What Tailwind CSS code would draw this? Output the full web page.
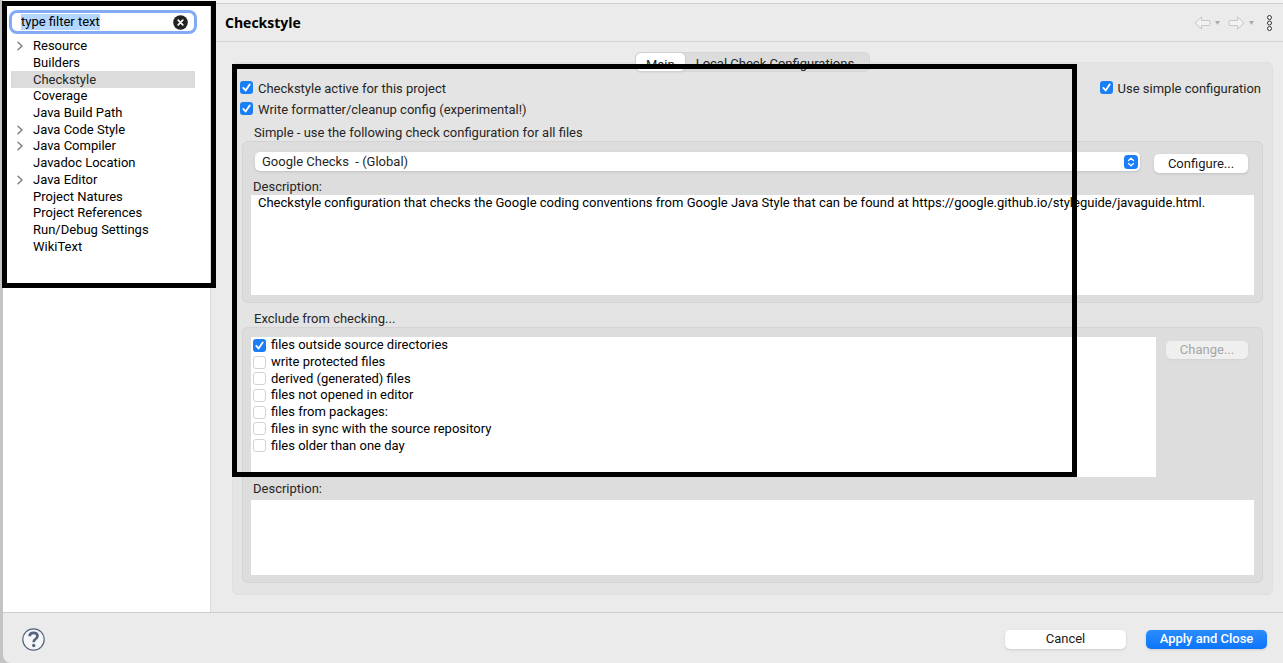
<!DOCTYPE html>
<html lang="en">
<head>
<meta charset="utf-8">
<title>Checkstyle</title>
<script src="https://cdn.jsdelivr.net/npm/@tailwindcss/browser@4"></script>
</head>
<body class="relative flex min-h-screen bg-[#c4c4c4] pl-[3px] font-['Roboto','Liberation_Sans',sans-serif] text-[13px] leading-4 text-[#262626]">
<svg class="hidden" aria-hidden="true">
  <symbol id="tick" viewBox="0 0 13 13"><path d="M3.3 6.9 5.6 9.5 9.7 3.4" fill="none" stroke="#fff" stroke-width="1.8" stroke-linecap="round" stroke-linejoin="round"/></symbol>
  <symbol id="chevron" viewBox="0 0 8 10"><path d="M2 1.2 6 5 2 8.8" fill="none" stroke="#808080" stroke-width="1.5" stroke-linecap="round" stroke-linejoin="round"/></symbol>
</svg>

<div class="flex min-w-0 flex-1 flex-col rounded-bl-lg bg-[#ebebeb]">
  <div class="h-1 shrink-0 border-b border-[#cfcfcf] bg-[#f3f3f3]"></div>

  <div class="flex flex-1">
    <aside class="w-52 shrink-0 border-r border-[#dcdcdc] bg-white pt-[6px]">
      <div class="mr-[13px] ml-[6px] flex h-6 items-center rounded-lg bg-white pr-[9px] pl-3 ring-[3px] ring-[#82abf3] ring-inset">
        <input id="filter" type="text" aria-label="Filter" value="type filter text" class="w-full min-w-0 bg-transparent leading-4 text-black outline-none selection:bg-[#b3d7ff] selection:text-black">
        <button type="button" aria-label="Clear filter" class="shrink-0">
          <svg class="block size-[15px]" viewBox="0 0 15 15"><circle cx="7.5" cy="7.5" r="7.3" fill="#222"/><path d="m5.2 5.2 4.6 4.6m0-4.6-4.6 4.6" stroke="#fff" stroke-width="1.7" stroke-linecap="round"/></svg>
        </button>
      </div>
      <ul class="mt-1 mr-[15px] ml-2 grid h-[217px] auto-rows-fr text-black">
        <li class="flex items-center pl-[5px]"><svg class="mr-[9px] h-[10px] w-2"><use href="#chevron"/></svg>Resource</li>
        <li class="flex items-center pl-[22px]">Builders</li>
        <li class="flex items-center bg-[#dcdcdc] pl-[22px] text-[#262626]">Checkstyle</li>
        <li class="flex items-center pl-[22px]">Coverage</li>
        <li class="flex items-center pl-[22px]">Java Build Path</li>
        <li class="flex items-center pl-[5px]"><svg class="mr-[9px] h-[10px] w-2"><use href="#chevron"/></svg>Java Code Style</li>
        <li class="flex items-center pl-[5px]"><svg class="mr-[9px] h-[10px] w-2"><use href="#chevron"/></svg>Java Compiler</li>
        <li class="flex items-center pl-[22px]">Javadoc Location</li>
        <li class="flex items-center pl-[5px]"><svg class="mr-[9px] h-[10px] w-2"><use href="#chevron"/></svg>Java Editor</li>
        <li class="flex items-center pl-[22px]">Project Natures</li>
        <li class="flex items-center pl-[22px]">Project References</li>
        <li class="flex items-center pl-[22px]">Run/Debug Settings</li>
        <li class="flex items-center pl-[22px]">WikiText</li>
      </ul>
    </aside>

    <main class="flex min-w-0 flex-1 flex-col">
      <header class="flex h-[38px] shrink-0 items-center border-b border-[#d3d3d3] pr-[10px] pl-[14px]">
        <h1 class="flex-1 font-['Open_Sans','Noto_Sans',sans-serif] text-sm leading-4 font-bold text-black">Checkstyle</h1>
        <button type="button" aria-label="Back" class="mr-1"><svg class="block h-[14px] w-[17px]" viewBox="0 0 17 14" fill="#f2f2f2" stroke="#c6c6c6" stroke-linejoin="round"><path d="M1 7 7.5 1v3.5H15q1 0 1 1v3q0 1-1 1H7.5V13Z"/></svg></button>
        <button type="button" aria-label="Back history" class="mr-2"><svg class="block h-1 w-[5px]" viewBox="0 0 5 4"><path d="M0 0h5L2.5 4Z" fill="#aaa"/></svg></button>
        <button type="button" aria-label="Forward" class="mr-1"><svg class="block h-[14px] w-[17px]" viewBox="0 0 17 14" fill="#f2f2f2" stroke="#c6c6c6" stroke-linejoin="round"><path d="M16 7 9.5 1v3.5H2q-1 0-1 1v3q0 1 1 1h7.5V13Z"/></svg></button>
        <button type="button" aria-label="Forward history" class="mr-3"><svg class="block h-1 w-[5px]" viewBox="0 0 5 4"><path d="M0 0h5L2.5 4Z" fill="#aaa"/></svg></button>
        <button type="button" aria-label="View menu"><svg class="block h-[18px] w-[7px]" viewBox="0 0 7 18" fill="#f4f4f4" stroke="#333"><circle cx="3.5" cy="3.5" r="2"/><circle cx="3.5" cy="9" r="2"/><circle cx="3.5" cy="14.5" r="2"/></svg></button>
      </header>

      <div class="flex flex-1 flex-col px-[10px] pt-[10px] pb-[17px] pl-[21px]">
        <div class="z-10 -mb-[10px] flex h-5 self-center rounded-md bg-[#dcdcdc] ring-1 ring-[#d6d6d6] ring-inset" role="tablist">
          <button type="button" role="tab" aria-selected="true" class="rounded-md border border-[#d0d0d0] bg-white px-[10px] pt-1 shadow-xs">Main</button>
          <button type="button" role="tab" aria-selected="false" class="pt-1 pr-4 pl-[10px]">Local Check Configurations</button>
        </div>

        <div class="flex-1 rounded-md border border-[#dfdfdf] bg-[#e4e4e4] px-[9px] pt-[18px] pb-[10px]">
          <div class="-ml-[2px] flex justify-between pr-[2px]">
            <label class="flex items-start gap-[5px]"><span class="grid size-[13px]"><input type="checkbox" checked class="peer col-start-1 row-start-1 size-[13px] appearance-none rounded-[3px] checked:bg-[#1a7ff5]"><svg class="pointer-events-none col-start-1 row-start-1 hidden size-[13px] peer-checked:block"><use href="#tick"/></svg></span>Checkstyle active for this project</label>
            <label class="flex items-start gap-[5px]"><span class="grid size-[13px]"><input type="checkbox" checked class="peer col-start-1 row-start-1 size-[13px] appearance-none rounded-[3px] checked:bg-[#1a7ff5]"><svg class="pointer-events-none col-start-1 row-start-1 hidden size-[13px] peer-checked:block"><use href="#tick"/></svg></span>Use simple configuration</label>
          </div>
          <label class="mt-[5px] -ml-[2px] flex items-start gap-[5px]"><span class="grid size-[13px]"><input type="checkbox" checked class="peer col-start-1 row-start-1 size-[13px] appearance-none rounded-[3px] checked:bg-[#1a7ff5]"><svg class="pointer-events-none col-start-1 row-start-1 hidden size-[13px] peer-checked:block"><use href="#tick"/></svg></span>Write formatter/cleanup config (experimental!)</label>

          <h2 id="simple" class="mt-[7px] pl-3">Simple - use the following check configuration for all files</h2>
          <section aria-labelledby="simple" class="rounded-md border border-[#d4d4d4] bg-[#dddddd] px-2 pt-[10px] pb-[7px]">
            <div class="flex items-start pr-[6px] pl-1">
              <div class="grid flex-1 items-center">
                <select aria-label="Check configuration" class="col-start-1 row-start-1 h-[19px] w-full appearance-none rounded-[5px] bg-white pr-6 pl-[7px] shadow-sm"><option>Google Checks&nbsp; - (Global)</option></select>
                <svg class="pointer-events-none col-start-1 row-start-1 mr-[2px] size-[14px] justify-self-end" viewBox="0 0 14 14"><rect width="14" height="14" rx="3.5" fill="#1a7ff5"/><path d="M4.5 5.5 7 3.2l2.5 2.3M4.5 8.5 7 10.800l2.5-2.3" fill="none" stroke="#fff" stroke-width="1.3" stroke-linecap="round" stroke-linejoin="round"/></svg>
              </div>
              <button type="button" class="mt-[2px] ml-[14px] h-[19px] w-[94px] rounded-[5px] bg-white text-[#1a1a1a] shadow-sm">Configure...</button>
            </div>
            <label for="desc1" class="mt-[6px] block pl-[2px]">Description:</label>
            <textarea id="desc1" readonly class="block h-[100px] w-full resize-none bg-white px-[7px] text-black outline-none">Checkstyle configuration that checks the Google coding conventions from Google Java Style that can be found at https://google.github.io/styleguide/javaguide.html.</textarea>
          </section>

          <h2 id="exclude" class="mt-2 pl-3">Exclude from checking...</h2>
          <section aria-labelledby="exclude" class="rounded-md border border-[#d4d4d4] bg-[#dddddd] px-2 pt-[9px] pb-[7px]">
            <div class="flex items-start pr-[6px]">
              <div class="h-[140px] flex-1 bg-white pl-[2px] text-black">
                <div class="grid h-[117px] auto-rows-fr">
                  <label class="flex items-center gap-[5px]"><span class="grid size-[13px]"><input type="checkbox" checked class="peer col-start-1 row-start-1 size-[13px] appearance-none rounded-[3px] checked:bg-[#1a7ff5]"><svg class="pointer-events-none col-start-1 row-start-1 hidden size-[13px] peer-checked:block"><use href="#tick"/></svg></span>files outside source directories</label>
                  <label class="flex items-center gap-[5px]"><input type="checkbox" class="size-[13px] appearance-none rounded-[3px] border border-[#d2d2d2] bg-white">write protected files</label>
                  <label class="flex items-center gap-[5px]"><input type="checkbox" class="size-[13px] appearance-none rounded-[3px] border border-[#d2d2d2] bg-white">derived (generated) files</label>
                  <label class="flex items-center gap-[5px]"><input type="checkbox" class="size-[13px] appearance-none rounded-[3px] border border-[#d2d2d2] bg-white">files not opened in editor</label>
                  <label class="flex items-center gap-[5px]"><input type="checkbox" class="size-[13px] appearance-none rounded-[3px] border border-[#d2d2d2] bg-white">files from packages:</label>
                  <label class="flex items-center gap-[5px]"><input type="checkbox" class="size-[13px] appearance-none rounded-[3px] border border-[#d2d2d2] bg-white">files in sync with the source repository</label>
                  <label class="flex items-center gap-[5px]"><input type="checkbox" class="size-[13px] appearance-none rounded-[3px] border border-[#d2d2d2] bg-white">files older than one day</label>
                </div>
              </div>
              <button type="button" disabled class="mt-1 ml-[10px] h-[18px] w-[82px] rounded-[5px] bg-[#efefef] text-[#a6a6a6] shadow-xs">Change...</button>
            </div>
            <label for="desc2" class="mt-1 mb-[3px] block pl-[2px]">Description:</label>
            <textarea id="desc2" readonly class="block h-[75px] w-full resize-none bg-white px-[7px] outline-none"></textarea>
          </section>
        </div>
      </div>
    </main>
  </div>

  <footer class="flex h-[51px] shrink-0 items-center border-t border-[#cfcfcf] pr-4 pl-[19px]">
    <button type="button" aria-label="Help" class="mt-[2px] mr-auto"><svg class="block size-[23px]" viewBox="0 0 23 23" fill="none" stroke="#56657f"><circle cx="11.5" cy="11.5" r="10.7" fill="#f6f6f8" stroke-width="1.2"/><path d="M7.5 8.2Q8 4.9 11.6 4.9q3.9 0 3.9 3.2 0 1.9-2 3.1-1.8 1.1-1.8 3" stroke-width="2.7"/><circle cx="11.7" cy="17.5" r="1.7" fill="#56657f" stroke="none"/></svg></button>
    <button type="button" class="mt-[2px] h-[19px] w-[121px] rounded-[5px] bg-white text-[#1a1a1a] shadow-sm">Cancel</button>
    <button type="button" class="mt-[2px] ml-5 h-[19px] w-[121px] rounded-[5px] bg-linear-to-b from-[#2a8cff] to-[#0a74f8] font-medium text-white shadow-sm">Apply and Close</button>
  </footer>
</div>

<!-- Highlight frames over the tree and the settings area -->
<div class="pointer-events-none absolute top-px left-[2px] z-20 h-[287px] w-[214px] border-5 border-black"></div>
<div class="pointer-events-none absolute top-16 right-[206px] left-[232px] z-20 h-[413px] border-5 border-black"></div>

<script>
  const filter = document.getElementById("filter");
  filter.focus();
  filter.select();
</script>
</body>
</html>
